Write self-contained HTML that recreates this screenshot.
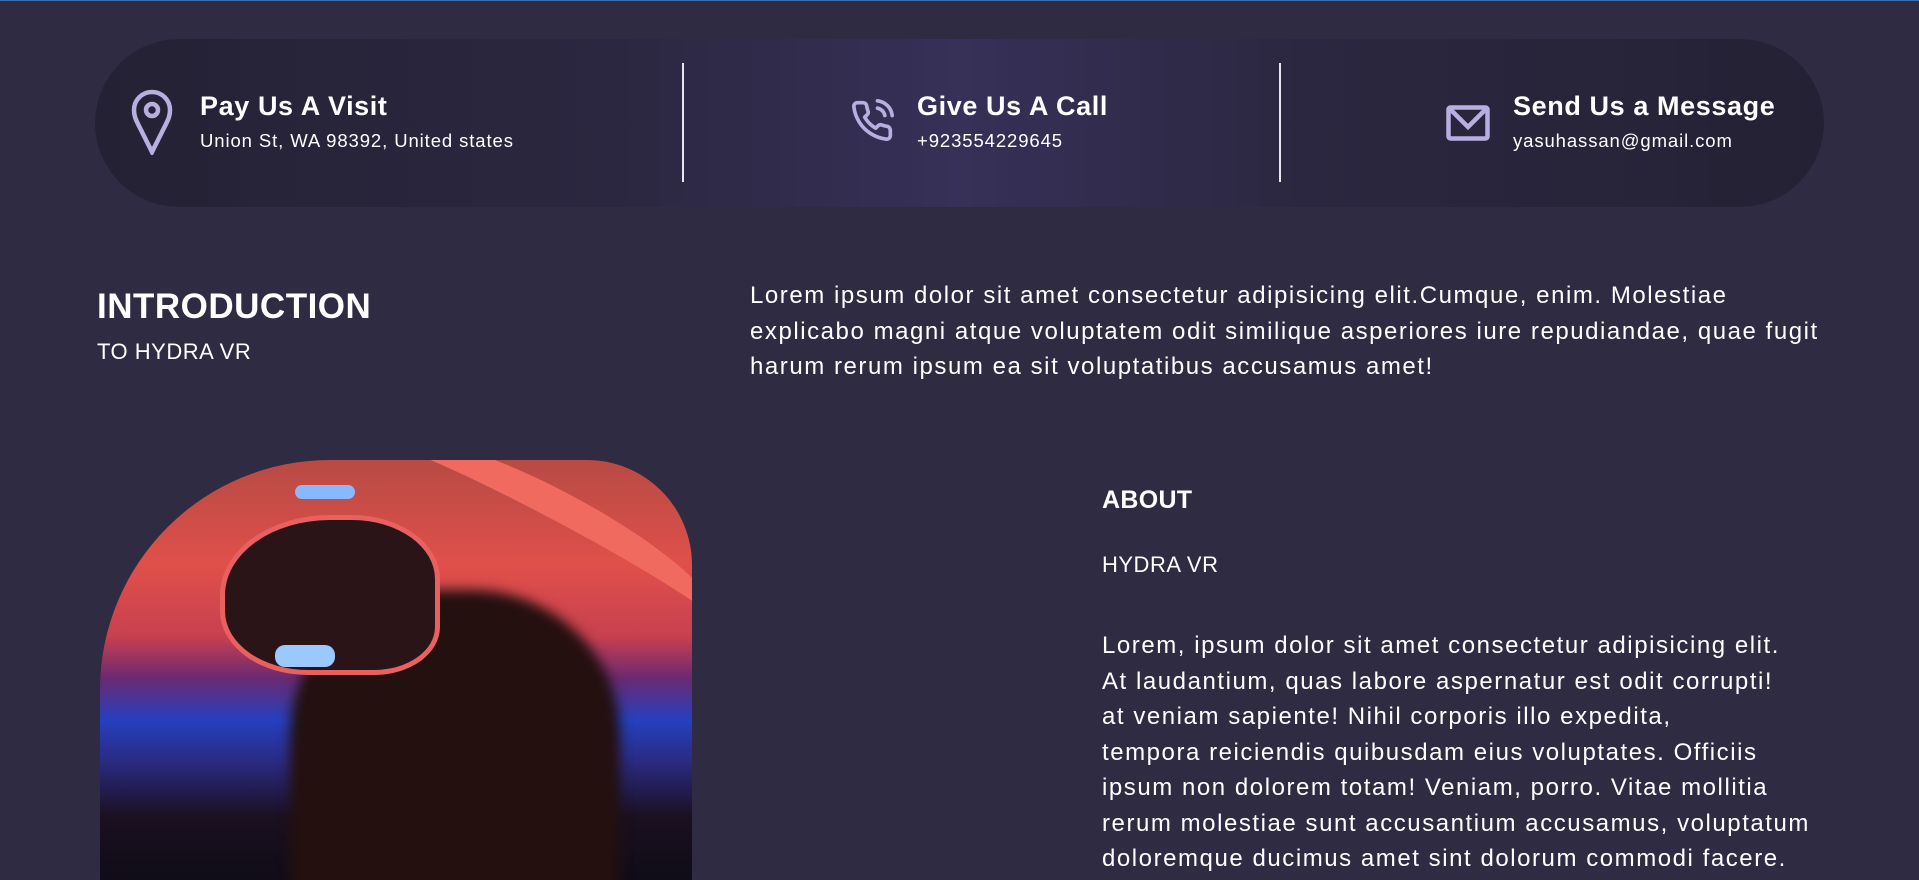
<!DOCTYPE html>
<html><head><meta charset="utf-8"><style>
*{margin:0;padding:0;box-sizing:border-box}
body{width:1919px;height:877px;overflow:hidden;background:#2f2b43;font-family:"Liberation Sans",sans-serif;color:#fff;position:relative;border-top:1px solid #3a6db0}
.bar{position:absolute;left:95px;top:38px;width:1729px;height:168px;border-radius:84px;background:linear-gradient(90deg,#252134 0%,#2b2740 30%,#373058 50%,#2b2740 70%,#252134 100%)}
.div{position:absolute;top:62px;width:2px;height:119px;background:#e8e6f0}
.it{position:absolute}
.it h3{font-size:27px;font-weight:bold;letter-spacing:0.6px;line-height:32px}
.it p{font-size:18.5px;margin-top:8px;letter-spacing:0.9px}
.abs{position:absolute}
.para{font-size:24px;line-height:35.5px;letter-spacing:1.55px}
</style></head><body>
<div class="bar"></div>
<div class="div" style="left:682px"></div>
<div class="div" style="left:1279px"></div>
<svg class="abs" style="left:131px;top:88px" width="42" height="66" viewBox="0 0 42 66"><path d="M21 3C11 3 3 11 3 21c0 6 2 10 4 14l14 28 14-28c2-4 4-8 4-14C39 11 31 3 21 3z" fill="none" stroke="#b9aee0" stroke-width="4.5"/><circle cx="21" cy="21" r="6" fill="none" stroke="#b9aee0" stroke-width="4.5"/></svg>
<div class="it" style="left:200px;top:89px"><h3>Pay Us A Visit</h3><p>Union St, WA 98392, United states</p></div>
<svg class="abs" style="left:850px;top:98px" width="44" height="44" viewBox="0 0 24 24" fill="none" stroke="#b9aee0" stroke-width="2" stroke-linecap="round" stroke-linejoin="round"><path d="M22 16.9v3a2 2 0 0 1-2.2 2 19.8 19.8 0 0 1-8.6-3.1 19.5 19.5 0 0 1-6-6A19.8 19.8 0 0 1 2.1 4.2 2 2 0 0 1 4.1 2h3a2 2 0 0 1 2 1.7c.1 1 .4 1.9.7 2.8a2 2 0 0 1-.5 2.1L8 9.9a16 16 0 0 0 6 6l1.3-1.3a2 2 0 0 1 2.1-.4c.9.3 1.8.6 2.8.7a2 2 0 0 1 1.7 2z"/><path d="M15 5a5 5 0 0 1 4 4M15 1a9 9 0 0 1 8 8"/></svg>
<div class="it" style="left:917px;top:89px"><h3>Give Us A Call</h3><p>+923554229645</p></div>
<svg class="abs" style="left:1446px;top:104px" width="44" height="36" viewBox="0 0 44 36"><rect x="2.5" y="2.5" width="39" height="31" rx="2" fill="none" stroke="#b9aee0" stroke-width="4.5"/><path d="M4 4l18 18L40 4" fill="none" stroke="#b9aee0" stroke-width="4.5"/></svg>
<div class="it" style="left:1513px;top:89px"><h3>Send Us a Message</h3><p>yasuhassan@gmail.com</p></div>

<div class="abs" style="left:97px;top:286px;font-size:35px;font-weight:bold;letter-spacing:0.5px">INTRODUCTION</div>
<div class="abs" style="left:97px;top:338px;font-size:22px;letter-spacing:0.5px">TO HYDRA VR</div>
<div class="abs para" style="left:750px;top:277px">Lorem ipsum dolor sit amet consectetur adipisicing elit.Cumque, enim. Molestiae<br>explicabo magni atque voluptatem odit similique asperiores iure repudiandae, quae fugit<br>harum rerum ipsum ea sit voluptatibus accusamus amet!</div>

<div class="abs" style="left:100px;top:459px;width:592px;height:420px;border-radius:230px 105px 0 0;overflow:hidden;background:linear-gradient(180deg,#b84a44 0%,#e0504a 25%,#c84050 42%,#6a2a70 52%,#2540c0 62%,#2a2a80 72%,#1a1020 85%,#100c18 100%)">
 <div class="abs" style="left:190px;top:130px;width:330px;height:320px;border-radius:45% 45% 0 0;background:#24100f;filter:blur(6px)"></div>
 <div class="abs" style="left:120px;top:55px;width:220px;height:160px;border-radius:50% 40% 30% 40%;background:#2a1418;border:5px solid #e86060"></div>
 <div class="abs" style="left:260px;top:30px;width:380px;height:90px;border-radius:50%;border-top:30px solid #f06a60;transform:rotate(28deg)"></div>
 <div class="abs" style="left:195px;top:25px;width:60px;height:14px;border-radius:8px;background:#8ab8ff"></div>
 <div class="abs" style="left:175px;top:185px;width:60px;height:22px;border-radius:10px;background:#9ac8ff"></div>
</div>

<div class="abs" style="left:1102px;top:485px;font-size:25px;font-weight:bold;letter-spacing:0.3px">ABOUT</div>
<div class="abs" style="left:1102px;top:551px;font-size:22px;letter-spacing:0.5px">HYDRA VR</div>
<div class="abs para" style="left:1102px;top:627px">Lorem, ipsum dolor sit amet consectetur adipisicing elit.<br>At laudantium, quas labore aspernatur est odit corrupti!<br>at veniam sapiente! Nihil corporis illo expedita,<br>tempora reiciendis quibusdam eius voluptates. Officiis<br>ipsum non dolorem totam! Veniam, porro. Vitae mollitia<br>rerum molestiae sunt accusantium accusamus, voluptatum<br>doloremque ducimus amet sint dolorum commodi facere.</div>
</body></html>
